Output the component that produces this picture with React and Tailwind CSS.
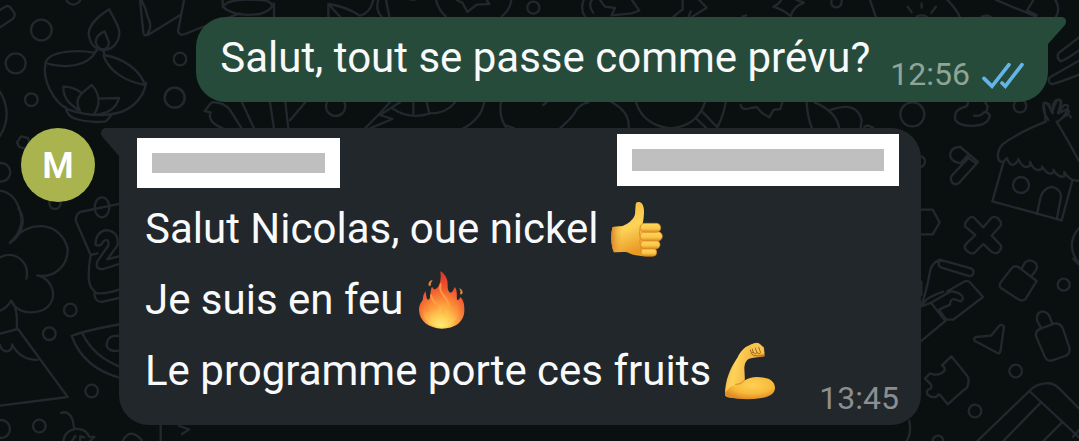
import React from "react";

const Doodles = () => (
  <svg
    viewBox="0 0 3237 1323"
    preserveAspectRatio="xMidYMid slice"
    className="absolute inset-0 h-full w-full"
    fill="none"
    stroke="#22282d"
    strokeWidth="7"
    strokeLinecap="round"
    strokeLinejoin="round"
    aria-hidden="true"
  >
    {/* oil lamp and bubbles */}
    <path d="M0 30L16 20Q24 15 31 22L41 36Q48 46 39 56L0 82" />
    <circle cx="124" cy="90" r="31" />
    <circle cx="47" cy="190" r="30" />
    <circle cx="94" cy="299" r="19" />
    <circle cx="540" cy="177" r="19" />
    <circle cx="524" cy="293" r="30" />
    <circle cx="3" cy="517" r="28" />
    <circle cx="220" cy="-8" r="22" />
    <path d="M51 428L63 409L84 414L90 432L76 446L58 441Z" />
    <path d="M0 275Q40 342 0 408M0 572Q55 580 65 660Q62 700 30 728" />
    <path d="M328 28C295 48 266 76 266 102C270 130 285 149 308 150C335 151 356 130 358 101C360 78 338 52 328 28Z" />
    <path d="M314 94Q289 103 287 126Q292 147 309 148Q327 145 327 127ZM290 150L278 168C240 212 150 198 137 187C150 150 240 150 282 158M308 150Q316 162 311 168C330 220 385 246 435 255C420 210 370 174 311 165" />
    <path d="M137 187C125 240 160 305 203 328C280 355 360 350 400 315Q434 285 438 248M196 320Q202 350 228 357Q270 370 318 364L334 346" />
    <path d="M234 330C210 312 190 298 190 260Q220 260 244 278M240 332Q220 300 252 274L275 255C295 275 306 310 282 342M295 296L357 294Q345 340 284 344" />
    <path d="M420 0L430 98Q432 109 444 105L542 44M424 0Q438 25 443 50Q460 80 440 105M552 0L534 94Q538 108 555 102L600 84" />
    {/* cloud, cake and melon slice on the left */}
    <g transform="translate(0 630)">
      <path d="M30 99C75 70 75 20 55 -5M35 94C80 30 180 30 203 115C205 170 160 205 112 196C160 205 180 270 130 300C90 315 45 305 34 272Q20 295 0 302M0 142C45 120 90 155 79 206M34 272Q55 295 50 357" />
      <path d="M0 371L54 357L203 561L0 587M0 405Q5 425 22 424Q38 420 36 403Q60 450 112 450" />
      <circle cx="211" cy="300" r="19" />
      <circle cx="148" cy="371" r="19" />
      <circle cx="275" cy="543" r="19" />
      <circle cx="118" cy="648" r="19" />
      <circle cx="3" cy="657" r="27" />
      <path d="M365 -20L240 6Q225 16 228 34L272 135Q264 180 267 213Q270 235 290 250Q325 252 366 235M283 252Q285 275 305 276L365 262M272 135L292 130" />
      <circle cx="165" cy="-20" r="17" />
      <ellipse cx="306" cy="-8" rx="22" ry="30" />
      <path d="M286 104Q288 66 318 60Q360 65 352 107L322 148L370 135M286 104Q303 112 310 94Q326 82 326 105L292 154Q284 180 310 177L370 158" />
      <path d="M215 378Q260 360 365 342M215 378Q250 475 365 505M248 371Q280 440 365 472M365 379Q320 370 320 408Q330 430 365 420" />
      <path d="M183 609Q206 600 218 630L223 656M190 693Q192 665 224 657Q258 655 267 680L283 681L270 693M216 693L226 678M240 693L241 679L253 682" />
      <path d="M368 693Q390 650 425 690M482 640V693M537 648L568 658L546 672" />
    </g>
    {/* hut, tools */}
    <g transform="translate(2700 270)">
      <circle cx="37" cy="73" r="36" />
      <circle cx="360" cy="48" r="19" />
      <circle cx="58" cy="215" r="17" />
      <path d="M203 30Q208 50 188 53Q160 62 166 90Q180 110 225 107Q265 104 270 76Q260 62 250 68Q242 80 222 77M252 30L263 50Q262 66 250 68" />
      <path d="M182 220Q150 215 150 193Q155 170 181 171L234 216L179 277Q167 288 156 277Q149 265 156 256L207 202M182 220L201 198M203 202L225 218" />
      <path d="M437 95Q350 130 307 164Q292 180 294 204Q300 220 311 214Q322 205 320 204Q330 230 343 223Q355 215 355 207Q370 240 390 227L390 216Q405 250 426 236L426 229Q445 260 460 247L460 239Q475 265 493 259L493 246Q510 275 537 272M470 95Q500 145 537 213" />
      <path d="M437 95L432 46Q430 35 447 42L456 67L468 36Q480 22 484 35L474 70L498 59Q511 60 505 70L473 95M311 214L277 334L485 391L517 272M411 372L422 320Q434 290 459 291Q484 300 483 321L471 384" />
      <circle cx="363" cy="285" r="24" />
      <path d="M60 359H98L119 397L98 433H60M537 414Q494 465 537 520" />
      <path d="M206 386Q213 376 223 384L250 412L273 385Q281 376 294 385Q307 397 301 408L275 437L302 465Q307 479 292 489Q282 491 274 485L250 462L224 488Q212 495 198 480Q190 470 199 461L226 435L196 410Q192 400 206 386Z" />
    </g>
    <g transform="translate(2700 780)">
      <path d="M63 140Q80 90 88 45Q91 10 119 -1M119 -1L213 25Q225 31 219 43Q215 51 203 47L122 22Q112 15 119 -1ZM64 137Q80 110 130 95M142 94L195 64Q205 60 212 69L249 111L160 179L138 178L117 149L150 134Q150 120 160 117L183 124Q194 115 184 105Q165 92 150 95L93 128L136 183L65 242M64 139L93 128M64 65V105" />
      <path d="M333 27Q342 14 355 21L410 63L376 118Q365 126 352 116L303 84Q295 76 303 66ZM366 24L375 7Q390 -5 406 8Q416 20 407 32L393 50" />
      <circle cx="491" cy="74" r="18" />
      <circle cx="347" cy="333" r="19" />
      <circle cx="225" cy="453" r="19" />
      <circle cx="114" cy="543" r="16" />
      <path d="M312 200Q305 191 298 197L273 227L227 231Q219 236 225 243L294 280Q300 281 302 270ZM424 205L411 182Q408 157 427 154Q444 157 448 168L458 193M408 228Q405 213 422 206L462 191Q480 188 488 204L508 263Q512 281 495 288L455 302Q440 304 434 289Z" />
      <path d="M154 289L202 348Q209 360 203 376Q202 386 190 391L143 433L121 406Q112 400 111 409Q95 416 82 403Q76 390 92 386Q98 375 90 371L75 355L90 340L103 344Q120 345 132 334Q138 323 126 316Z" />
      <path d="M232 543L388 393Q410 370 439 370Q460 368 475 383L537 445M388 393L537 532M422 428L310 543M486 487L430 543M519 530L537 510M28 483Q35 520 20 543M520 -4L537 13" />
    </g>
    {/* top right corner */}
    <g transform="translate(2610 0)">
      <path d="M0 0L18 52M232 0Q258 25 270 52M113 20L125 37M155 10V23M198 20L184 38M140 50Q155 42 170 50M378 0L498 50M471 32L490 0M471 32L500 45M556 0Q572 25 558 50M335 50L350 46L365 52" />
      <path d="M627 112L566 159Q558 174 572 184Q590 178 627 151M627 182L540 232Q530 245 545 253Q575 245 627 224" />
      <path d="M535 360Q515 330 521 310Q530 300 548 340Q545 302 565 299Q578 300 569 337Q580 306 594 318Q595 330 580 350Q598 340 603 352" />
    </g>
    {/* strip along the top edge */}
    <path d="M600 84L720 40M668 20Q690 -10 800 2Q840 20 780 42Q700 52 668 20V-4M822 10V50M985 50V12Q1040 20 1080 47M985 12L1020 50M1080 47Q1110 40 1120 0M1135 0Q1125 30 1145 50M1158 0L1168 50M1225 -4Q1238 2 1250 -4M1308 0Q1315 30 1338 50M1534 0Q1530 30 1505 50M1370 0L1388 9L1402 36L1430 14L1468 12L1460 0" />
    <circle cx="1600" cy="23" r="18" />
    <path d="M1751 0Q1740 30 1755 50M1775 0Q1764 20 1780 38M1800 0L1815 20L1845 24L1835 46L1895 40L1918 32L1896 0M2048 0V28L2020 50M2098 0L2120 23L2076 50M2066 50L2072 34M2344 0Q2335 15 2320 20Q2350 30 2372 48Q2380 20 2412 8L2390 0M2495 0Q2490 22 2510 22Q2526 20 2525 0M2227 50L2238 46" />
    {/* band between the two bubbles */}
    <g transform="translate(180 285)">
      <circle cx="344" cy="8" r="30" />
      <circle cx="827" cy="34" r="29" />
      <path d="M434 48L455 22Q490 20 510 45L545 100M434 48L452 52Q440 80 488 100M545 20L582 100M630 22L642 100M676 22L685 100M736 22L690 76M915 100L955 60L990 22M930 100L997 72L960 60L1020 22M1000 42Q1050 75 1110 55Q1160 55 1185 22M1060 22V55M1100 22L1108 55M1272 22Q1265 70 1210 100M1323 22Q1315 65 1340 100M1362 100L1335 90M1450 30L1460 22" />
    </g>
    <g transform="translate(1680 285)">
      <path d="M0 100Q45 60 48 45Q65 25 85 22M155 22Q210 50 206 100M228 22Q250 90 330 100Q410 95 435 22M497 22Q490 65 470 100M426 49L467 92M410 72L440 100M542 30Q545 48 572 39L590 36L606 54L628 67L640 45L661 42L667 22M740 22Q742 65 756 100M764 22Q830 50 838 100M808 46Q890 15 905 75L902 98M912 96L923 91L939 98" />
    </g>
  </svg>
);

const DoubleCheck = () => (
  <svg
    viewBox="0 0 126 84"
    className="h-7 w-[42px] shrink-0"
    fill="none"
    stroke="#63b5e8"
    strokeWidth="11"
    strokeLinecap="round"
    role="img"
    aria-label="Lu"
  >
    <path d="M6 49L30 73L81 8" />
    <path d="M60 63L70 73L120 8" />
  </svg>
);

const ThumbsUp = () => (
  <svg viewBox="50 30 174 174" className="size-[58px] shrink-0" role="img" aria-label="Pouce levé">
    <defs>
      <linearGradient id="thumb" x1="0" y1="0" x2="0.3" y2="1">
        <stop offset="0" stopColor="#f5b53e" />
        <stop offset="0.55" stopColor="#fdd458" />
        <stop offset="1" stopColor="#e99a25" />
      </linearGradient>
      <linearGradient id="finger" x1="0" y1="0" x2="0" y2="1">
        <stop offset="0" stopColor="#ffda5e" />
        <stop offset="0.6" stopColor="#fbc646" />
        <stop offset="1" stopColor="#d98622" />
      </linearGradient>
      <linearGradient id="wrist">
        <stop offset="0" stopColor="#d9832a" />
        <stop offset="1" stopColor="#f8bd42" stopOpacity="0" />
      </linearGradient>
    </defs>
    <path
      fill="url(#thumb)"
      d="M64 111Q80 110 94 108C110 102 128 88 131 73L133 43Q134 34 144 36C155 38 159 54 158 70Q157 88 154 102L180 120V193Q160 202 134 196C117 193 110 184 96 186L68 187Q61 174 60 148Q60 121 64 111Z"
    />
    <path fill="url(#wrist)" d="M64 111L94 108Q84 146 96 186L68 187Q61 174 60 148Q60 121 64 111Z" />
    <path fill="none" stroke="#df9127" strokeWidth="3" d="M156 100Q144 106 146 120Q142 130 147 145Q142 158 149 168Q145 184 151 194" />
    <g fill="url(#finger)" stroke="#d98525" strokeWidth="2">
      <rect x="149" y="175" width="47" height="24" rx="12" />
      <rect x="148" y="151" width="58" height="26" rx="13" />
      <rect x="147" y="125" width="66" height="28" rx="14" />
      <rect x="147" y="100" width="61" height="27" rx="13" />
    </g>
  </svg>
);

const Fire = () => (
  <svg viewBox="38 33 174 174" className="size-[58px] shrink-0" role="img" aria-label="Feu">
    <defs>
      <radialGradient id="flame" cx="0.5" cy="0.92" r="0.85">
        <stop offset="0" stopColor="#ffe769" />
        <stop offset="0.25" stopColor="#ffc24b" />
        <stop offset="0.5" stopColor="#fa8a38" />
        <stop offset="0.75" stopColor="#f0562f" />
        <stop offset="1" stopColor="#df3b2a" />
      </radialGradient>
      <radialGradient id="tongue" cx="0.5" cy="1" r="0.9">
        <stop offset="0" stopColor="#fff07c" />
        <stop offset="0.35" stopColor="#ffcf55" />
        <stop offset="0.7" stopColor="#fc9a3e" stopOpacity="0.8" />
        <stop offset="1" stopColor="#f9763a" stopOpacity="0.3" />
      </radialGradient>
    </defs>
    <path
      fill="url(#flame)"
      d="M120 34C135 42 143 58 142 75Q141 94 150 98C159 97 160 86 163 81C172 91 169 108 170 119Q177 122 180 111C190 119 193 137 192 155C190 187 162 205 125 206C85 205 58 184 56 151C56 134 62 128 67 120Q68 103 75 93C79 110 78 119 84 119C93 117 88 93 95 80Q100 89 105 88C117 82 124 62 120 34Z"
    />
    <path fill="url(#tongue)" d="M90 103C92 125 117 132 115 160Q123 158 130 142C136 155 136 165 145 166C164 160 172 144 166 124C184 160 168 199 125 200C82 199 62 174 71 142C74 155 82 160 91 154C100 139 84 124 90 103Z" />
    <path fill="none" stroke="#ffad42" strokeWidth="6" strokeLinecap="round" opacity="0.7" d="M121 73C112 104 144 108 145 138M92 106Q94 119 105 130" />
    <path fill="#e5842b" d="M97 60Q85 61 84 75Q88 79 91 77Q91 68 97 60ZM175 85Q183 91 179 102Q185 106 187 98Q187 87 175 85Z" />
  </svg>
);

const Biceps = () => (
  <svg viewBox="66 34 174 174" className="size-[58px] shrink-0" role="img" aria-label="Biceps">
    <defs>
      <linearGradient id="forearm" x1="0" y1="0" x2="1" y2="0.3">
        <stop offset="0" stopColor="#eba12c" />
        <stop offset="0.35" stopColor="#ffd35a" />
        <stop offset="1" stopColor="#e99e2e" />
      </linearGradient>
      <radialGradient id="muscle" cx="0.55" cy="0.35" r="0.65">
        <stop offset="0" stopColor="#ffd055" />
        <stop offset="0.6" stopColor="#f8bb3c" />
        <stop offset="1" stopColor="#df8c25" />
      </radialGradient>
    </defs>
    <path
      fill="url(#forearm)"
      d="M78 192C78 151 92 115 116 80Q123 63 140 49L157 41L172 36Q180 36 185 44L195 50L197 77L164 81Q145 82 140 95C132 111 139 130 137 149L139 201Q80 204 78 192Z"
    />
    <path
      fill="url(#muscle)"
      d="M98 165Q119 167 135 150C150 139 173 136 195 141C215 143 229 156 228 173C227 190 210 199 188 202Q138 210 87 200Q75 197 79 184Z"
    />
    <path fill="none" stroke="#e09a2b" strokeWidth="4" strokeLinecap="round" d="M110 161Q126 161 136 149" />
    <path fill="#f7c553" d="M157 42Q169 34 179 38Q194 46 196 66Q193 72 185 68Q178 72 171 67Q161 70 154 61Z" />
    <path fill="none" stroke="#a9691f" strokeWidth="3" strokeLinecap="round" d="M154 58Q156 69 163 66L160 55M163 66Q170 72 174 66L169 52M174 66Q182 72 185 66L179 50M156 68Q161 76 173 76L195 75" />
  </svg>
);

// hides a name or a phone number
const Masked = ({ className, barClassName }) => (
  <div className={`bg-white p-[15px] ${className}`}>
    <div className={`bg-[#bfbfbf] ${barClassName}`}></div>
  </div>
);

const messages = [
  { text: "Salut Nicolas, oue nickel", Emoji: ThumbsUp },
  { text: "Je suis en feu", Emoji: Fire },
  { text: "Le programme porte ces fruits", Emoji: Biceps },
];

const App = () => {
  return (
    <main className="relative min-h-screen overflow-hidden bg-[#0a1010] pt-[17px] pb-4 font-[Roboto,sans-serif] text-[42px] text-[#f8f9fb]">
      <Doodles />

      <section className="relative mr-[31px] ml-auto flex w-fit items-end rounded-[30px] rounded-tr-none bg-[#274b3a] pt-4 pr-6 pb-3 pl-6">
        <svg viewBox="0 0 54 81" className="absolute top-0 left-full h-[27px] w-[18px]" aria-hidden="true">
          <path fill="#274b3a" d="M0 0H42Q54 2 54 14Q54 20 49 26L0 81Z" />
        </svg>
        <p className="mb-2 leading-[49px]">Salut, tout se passe comme prévu?</p>
        <time className="ml-5 text-[32px] leading-8 text-[#8fa598]">12:56</time>
        <div className="ml-3">
          <DoubleCheck />
        </div>
      </section>

      <section className="relative mt-[26px] mr-[158px] ml-[21px] flex items-start gap-6">
        <div className="flex size-[74px] shrink-0 items-center justify-center rounded-full bg-[#a9b44f] pt-0.5 text-[36px] font-semibold text-white">
          M
        </div>
        <div className="relative flex-1 rounded-[30px] rounded-tl-none bg-[#22272b] pr-[22px] pb-[11px] pl-[18px]">
          <svg viewBox="0 0 54 84" className="absolute top-0 right-full h-7 w-[18px]" aria-hidden="true">
            <path fill="#22272b" d="M54 0H14Q0 2 0 16Q0 22 5 28L54 84Z" />
          </svg>
          <div className="flex h-[65px] items-start justify-between">
            <Masked className="mt-[10px]" barClassName="h-5 w-[173px]" />
            <Masked className="mt-[6px]" barClassName="h-[22px] w-[252px]" />
          </div>
          <div className="flex items-end justify-between">
            <ul className="mb-2 pl-2">
              {messages.map(({ text, Emoji }) => (
                <li key={text} className="flex h-[71px] items-center gap-2.5">
                  {text}
                  <Emoji />
                </li>
              ))}
            </ul>
            <time className="text-[32px] leading-8 text-[#8b8f92]">13:45</time>
          </div>
        </div>
      </section>
    </main>
  );
};

export default App;
